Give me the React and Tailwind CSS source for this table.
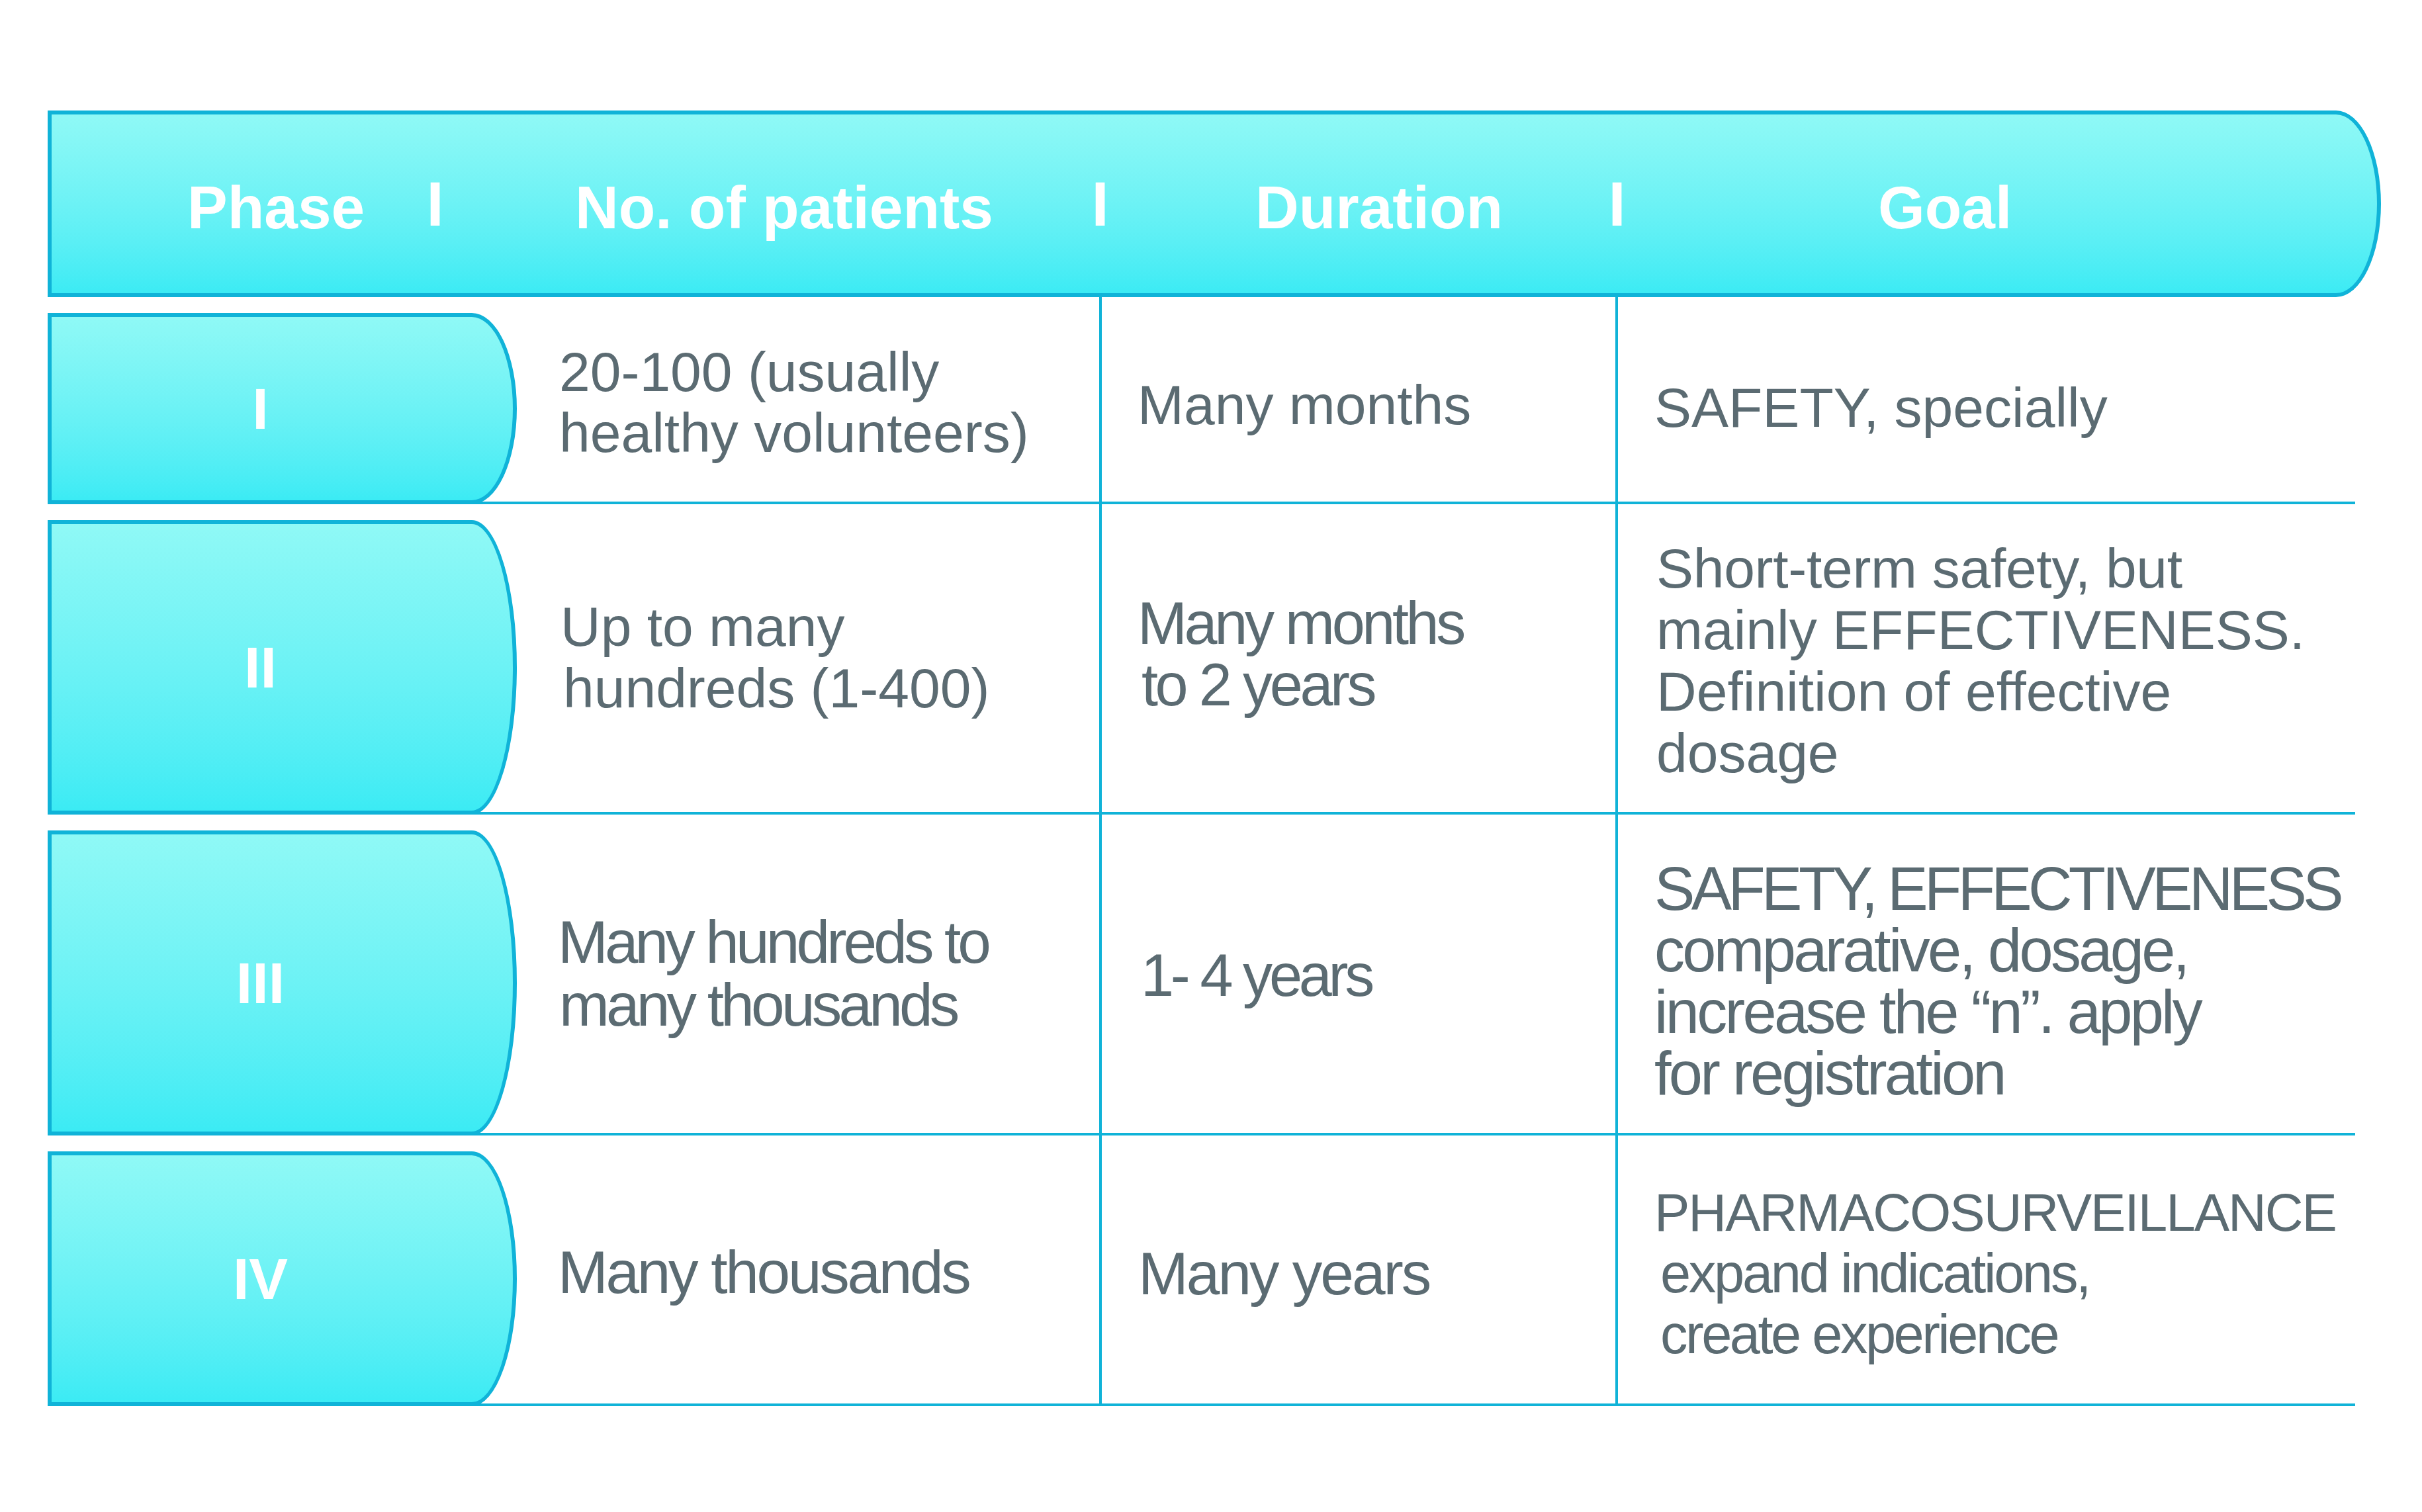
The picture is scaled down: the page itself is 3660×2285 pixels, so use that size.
const LINE = "border-[#10b3d8]";
const TEXT = "text-[#5b6b72]";

const rows = [
  {
    h: "h-[313px]",
    label: "I",
    c2: { cls: "pl-[64px] pb-[16px]", lines: [
      { t: "20-100 (usually", c: "text-[84px] leading-[92px]" },
      { t: "healthy volunteers)", c: "text-[84px] leading-[92px]" },
    ] },
    c3: { cls: "pl-[54px] pb-[8px]", lines: [
      { t: "Many months", c: "text-[84px] leading-[92px]" },
    ] },
    c4: { cls: "pl-[55px] pb-[0px]", lines: [
      { t: "SAFETY, specially", c: "text-[84px] leading-[92px]" },
    ] },
  },
  {
    h: "h-[469px]",
    label: "II",
    c2: { cls: "pl-[66px] pb-[26px]", lines: [
      { t: "Up to many", c: "text-[84px] leading-[93px]" },
      { t: "hundreds (1-400)", c: "text-[84px] leading-[93px] pl-[4px]" },
    ] },
    c3: { cls: "pl-[54px] pb-[36px]", lines: [
      { t: "Many months", c: "text-[90px] leading-[93px] tracking-[-4.4px]" },
      { t: "to 2 years", c: "text-[90px] leading-[93px] tracking-[-4.4px] pl-[6px]" },
    ] },
    c4: { cls: "pl-[58px] pb-[16px]", lines: [
      { t: "Short-term safety, but", c: "text-[84px] leading-[93px] tracking-[-0.3px]" },
      { t: "mainly EFFECTIVENESS.", c: "text-[84px] leading-[93px]" },
      { t: "Definition of effective", c: "text-[84px] leading-[93px]" },
      { t: "dosage", c: "text-[84px] leading-[93px]" },
    ] },
  },
  {
    h: "h-[485px]",
    label: "III",
    c2: { cls: "pl-[62px] pb-[26px]", lines: [
      { t: "Many hundreds to", c: "text-[91px] leading-[95px] tracking-[-4.9px]" },
      { t: "many thousands", c: "text-[91px] leading-[95px] tracking-[-4.8px] pl-[2px]" },
    ] },
    c3: { cls: "pl-[59px] pb-[18px]", lines: [
      { t: "1- 4 years", c: "text-[90px] leading-[93px] tracking-[-5.2px]" },
    ] },
    c4: { cls: "pl-[55px] pb-[2px]", lines: [
      { t: "SAFETY, EFFECTIVENESS", c: "text-[92px] leading-[93px] tracking-[-5.6px]" },
      { t: "comparative, dosage,", c: "text-[92px] leading-[93px] tracking-[-3.7px]" },
      { t: "increase the \u201cn\u201d. apply", c: "text-[92px] leading-[93px] tracking-[-3.7px]" },
      { t: "for registration", c: "text-[92px] leading-[93px] tracking-[-3.7px]" },
    ] },
  },
  {
    h: "h-[409px]",
    label: "IV",
    c2: { cls: "pl-[62px] pb-[16px]", lines: [
      { t: "Many thousands", c: "text-[91px] leading-[93px] tracking-[-3.3px]" },
    ] },
    c3: { cls: "pl-[55px] pb-[12px]", lines: [
      { t: "Many years", c: "text-[91px] leading-[93px] tracking-[-3px]" },
    ] },
    c4: { cls: "pl-[55px] pb-[12px]", lines: [
      { t: "PHARMACOSURVEILLANCE", c: "text-[80px] leading-[92px] tracking-[-2px]" },
      { t: "expand indications,", c: "text-[83px] leading-[92px] tracking-[-3.3px] pl-[9px]" },
      { t: "create experience", c: "text-[83px] leading-[92px] tracking-[-3.5px] pl-[9px]" },
    ] },
  },
];

function Lines({ lines }) {
  return (
    <div className={TEXT}>
      {lines.map((l, i) => (
        <div key={i} className={`whitespace-nowrap ${l.c}`}>
          {l.t}
        </div>
      ))}
    </div>
  );
}

function Sep() {
  return (
    <div className="w-[25px] flex justify-center text-[94px] leading-none -translate-y-[4px]">
      I
    </div>
  );
}

function Header() {
  return (
    <div className={`w-[3526px] h-[282px] border-[6px] ${LINE} rounded-r-[68px_50%] bg-linear-to-b from-[#8ff9f6] to-[#3bebf4] flex items-center pt-[10px] text-white font-bold text-[91px] leading-none whitespace-nowrap`}>
      <div className="w-[567px] pl-[205px]">Phase</div>
      <Sep />
      <div className="w-[980px] pl-[199px]">No. of patients</div>
      <Sep />
      <div className="w-[756px] pl-[222px]">Duration</div>
      <Sep />
      <div className="pl-[382px]">Goal</div>
    </div>
  );
}

function Row({ r }) {
  return (
    <div className={`flex w-[3487px] ${r.h} border-b-4 ${LINE}`}>
      <div className={`w-[709px] shrink-0 mt-[24px] -mb-[4px] border-[6px] ${LINE} rounded-r-[68px_50%] bg-linear-to-b from-[#8ff9f6] to-[#3bebf4] flex items-center justify-center pr-[66px] text-white font-bold text-[88px] leading-none`}>
        {r.label}
      </div>
      <div className={`w-[880px] shrink-0 pt-[24px] flex items-center ${r.c2.cls}`}>
        <Lines lines={r.c2.lines} />
      </div>
      <div className={`w-[780px] shrink-0 border-l-4 ${LINE} pt-[24px] flex items-center ${r.c3.cls}`}>
        <Lines lines={r.c3.lines} />
      </div>
      <div className={`flex-1 border-l-4 ${LINE} pt-[24px] flex items-center ${r.c4.cls}`}>
        <Lines lines={r.c4.lines} />
      </div>
    </div>
  );
}

export default function App() {
  return (
    <div className="w-[3660px] h-[2285px] bg-white pt-[167px] pl-[72px] font-['Liberation_Sans',Arial,sans-serif] overflow-hidden">
      <Header />
      {rows.map((r) => (
        <Row key={r.label} r={r} />
      ))}
    </div>
  );
}
